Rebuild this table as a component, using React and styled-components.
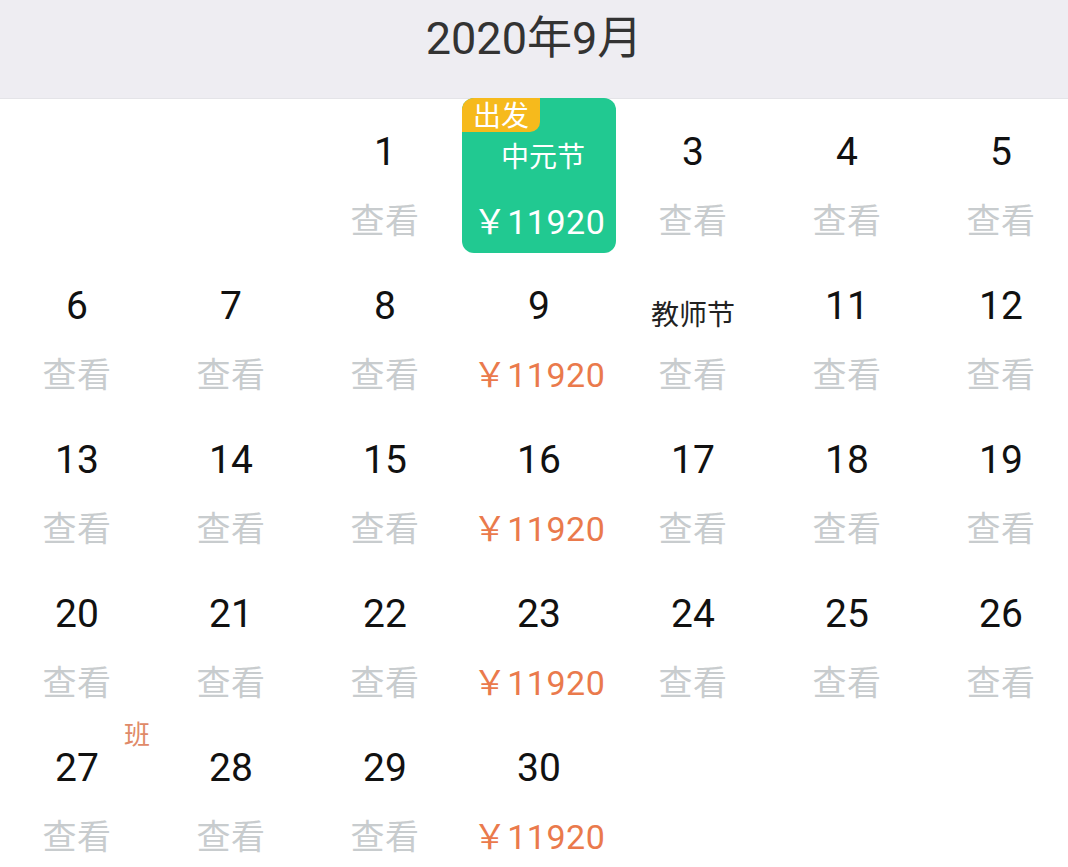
import React from 'react';
import styled, { createGlobalStyle } from 'styled-components';

const GlobalStyle = createGlobalStyle`
  html, body {
    margin: 0;
    padding: 0;
    background: #ffffff;
    font-family: Roboto, "Noto Sans", "Noto Sans CJK SC", sans-serif;
  }
`;

const Page = styled.div`
  width: 1068px;
  height: 867px;
  overflow: hidden;
  background: #ffffff;
`;

const Header = styled.div`
  height: 98px;
  background: #eeedf2;
  display: flex;
  justify-content: center;
  align-items: center;
  padding-bottom: 30px;
  box-sizing: border-box;
  font-size: 45px;
  color: #333333;
  font-family: Roboto, "Noto Sans CJK SC", sans-serif;
`;

const Grid = styled.div`
  display: grid;
  grid-template-columns: repeat(7, 154px);
  grid-auto-rows: 154px;
  border-top: 1px solid #e4e4e8;
`;

const Cell = styled.div`
  position: relative;
  display: flex;
  flex-direction: column;
  align-items: center;
  padding-top: ${p => (p.$selected ? '40px' : '33px')};
  box-sizing: border-box;
  border-radius: 12px;
  background: ${p => (p.$selected ? '#21c991' : 'transparent')};
  margin-top: ${p => (p.$selected ? '-1px' : '0')};
`;

const DayNum = styled.div`
  height: 40px;
  line-height: 40px;
  font-size: 39px;
  color: #111111;
`;

const Festival = styled.div`
  height: 40px;
  box-sizing: border-box;
  line-height: 34px;
  font-size: 28px;
  color: ${p => (p.$light ? '#ffffff' : '#222222')};
  font-family: "Noto Sans CJK SC", sans-serif;
  padding-left: ${p => (p.$light ? '8px' : '0')};
  padding-top: ${p => (p.$light ? '0' : '10px')};
`;

const Sub = styled.div`
  margin-top: ${p => (p.$selected ? '24px' : '29px')};
  height: 40px;
  line-height: 40px;
  font-size: 34px;
  color: ${p => p.$color};
  font-family: Roboto, "Noto Sans CJK SC", sans-serif;
  letter-spacing: 0.5px;
`;

const Badge = styled.div`
  position: absolute;
  top: 0;
  left: 0;
  width: 78px;
  height: 34px;
  line-height: 32px;
  text-align: center;
  background: #f6ba1c;
  color: #ffffff;
  font-size: 28px;
  border-radius: 12px 0 10px 0;
  font-family: "Noto Sans CJK SC", sans-serif;
`;

const Tag = styled.div`
  position: absolute;
  top: 3px;
  left: 124px;
  font-size: 26px;
  line-height: 30px;
  color: #e08a68;
  font-family: "Noto Sans CJK SC", sans-serif;
`;

const PRICE = '￥11920';
const priceDays = [9, 16, 23, 30];

const DayCell = ({ day }) => {
  if (!day) return <Cell />;
  if (day === 2) {
    return (
      <Cell $selected>
        <Badge>出发</Badge>
        <Festival $light>中元节</Festival>
        <Sub $selected $color="#ffffff">{PRICE}</Sub>
      </Cell>
    );
  }
  const hasPrice = priceDays.includes(day);
  return (
    <Cell>
      {day === 27 && <Tag>班</Tag>}
      {day === 10 ? <Festival>教师节</Festival> : <DayNum>{day}</DayNum>}
      <Sub $color={hasPrice ? '#ea7a4c' : '#c8ccce'}>
        {hasPrice ? PRICE : '查看'}
      </Sub>
    </Cell>
  );
};

export default function App() {
  const days = [null, null];
  for (let d = 1; d <= 30; d++) days.push(d);

  return (
    <Page>
      <GlobalStyle />
      <Header>2020年9月</Header>
      <Grid>
        {days.map((d, i) => (
          <DayCell key={i} day={d} />
        ))}
      </Grid>
    </Page>
  );
}
